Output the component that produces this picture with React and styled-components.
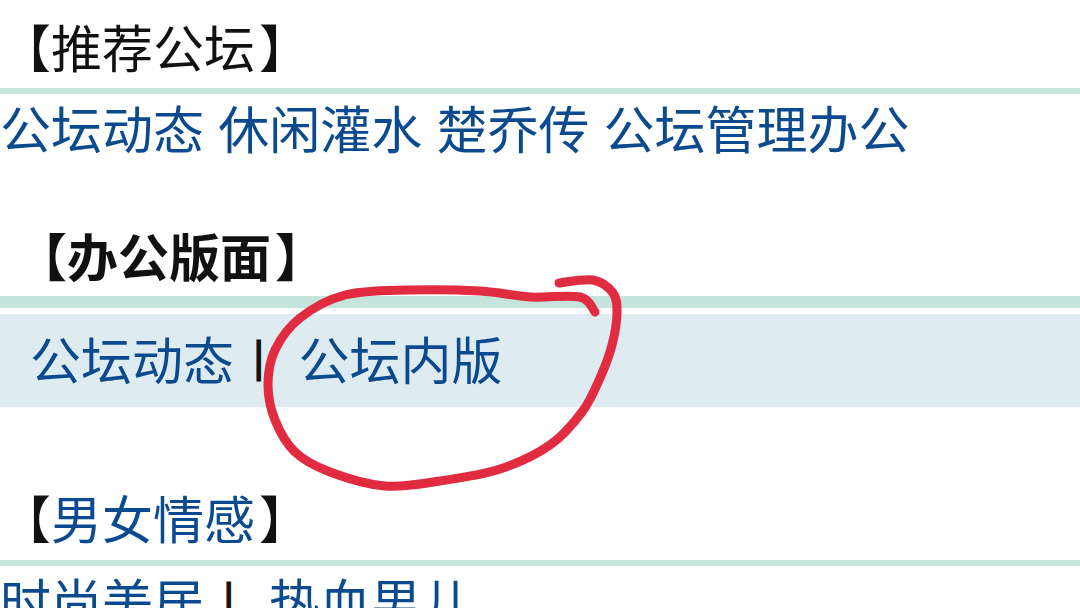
import React from "react";
import styled, { createGlobalStyle } from "styled-components";

const GlobalStyle = createGlobalStyle`
  html, body {
    margin: 0;
    padding: 0;
    background: #fff;
  }
`;

const Page = styled.div`
  position: relative;
  width: 1080px;
  height: 608px;
  overflow: hidden;
  background: #fff;
  font-family: "Liberation Sans", "Noto Sans CJK SC", sans-serif;
  font-size: 51px;
  white-space: nowrap;
`;

const Heading = styled.div`
  height: ${(p) => p.$height}px;
  margin-top: ${(p) => p.$top || 0}px;
  padding-left: ${(p) => p.$indent || 0}px;
  line-height: ${(p) => p.$height + (p.$shift ?? 14)}px;
  font-weight: ${(p) => (p.$bold ? 700 : 400)};
  color: #111;
`;

const CloseBracket = styled.span`
  display: inline-block;
  margin: 0 -4px 0 4px;
`;

const Rule = styled.div`
  height: ${(p) => p.$height || 6}px;
  background: #c5e5dc;
`;

const LinkRow = styled.div`
  height: ${(p) => p.$height}px;
  line-height: ${(p) => p.$height + (p.$shift ?? 0)}px;
  padding-left: ${(p) => p.$indent || 0}px;
`;

const Band = styled(LinkRow)`
  margin-top: 6px;
  background: #deebf0;
`;

const ForumLink = styled.a`
  color: #0b4a8f;
  text-decoration: none;
`;

const Sep = styled.span`
  display: inline-block;
  margin: 0 34px 0 19px;
  font-size: 44px;
  line-height: 1;
  vertical-align: 8px;
  color: #111;
  -webkit-text-stroke: 1px #111;
`;

const Scribble = styled.svg`
  position: absolute;
  left: 0;
  top: 0;
  pointer-events: none;
`;

// hand-drawn circle round 公坛内版, traced from the stroke
const circlePoints = [
  [559, 283], [593, 280], [613, 293], [617, 313], [612, 345], [600, 378],
  [582, 412], [550, 445], [500, 469], [440, 481], [385, 486], [330, 472],
  [295, 452], [275, 420], [268, 385], [275, 350], [300, 318], [345, 295],
  [408, 290], [480, 291], [530, 297], [580, 297], [595, 312],
];

function smoothPath(pts) {
  let d = `M${pts[0][0]} ${pts[0][1]}`;
  for (let i = 0; i < pts.length - 1; i++) {
    const p0 = pts[i - 1] || pts[i];
    const p1 = pts[i];
    const p2 = pts[i + 1];
    const p3 = pts[i + 2] || p2;
    const c1x = p1[0] + (p2[0] - p0[0]) / 6;
    const c1y = p1[1] + (p2[1] - p0[1]) / 6;
    const c2x = p2[0] - (p3[0] - p1[0]) / 6;
    const c2y = p2[1] - (p3[1] - p1[1]) / 6;
    d += ` C${c1x} ${c1y} ${c2x} ${c2y} ${p2[0]} ${p2[1]}`;
  }
  return d;
}

export default function App() {
  return (
    <Page>
      <GlobalStyle />

      <Heading $height={88}>
        【推荐公坛<CloseBracket>】</CloseBracket>
      </Heading>
      <Rule />
      <LinkRow $height={74} $shift={2}>
        <ForumLink>公坛动态</ForumLink> <ForumLink>休闲灌水</ForumLink>{" "}
        <ForumLink>楚乔传</ForumLink> <ForumLink>公坛管理办公</ForumLink>
      </LinkRow>

      <Heading $height={76} $top={52} $indent={16} $shift={4} $bold>
        【办公版面<CloseBracket>】</CloseBracket>
      </Heading>
      <Rule $height={12} />
      <Band $height={93} $indent={30} $shift={4}>
        <ForumLink>公坛动态</ForumLink>
        <Sep>|</Sep>
        <ForumLink>公坛内版</ForumLink>
      </Band>

      <Heading $height={80} $top={73} $shift={4}>
        【<ForumLink>男女情感</ForumLink>
        <CloseBracket>】</CloseBracket>
      </Heading>
      <Rule />
      <LinkRow $height={78}>
        <ForumLink>时尚美居</ForumLink>
        <Sep>|</Sep>
        <ForumLink>热血男儿</ForumLink>
      </LinkRow>

      <Scribble width="1080" height="608" viewBox="0 0 1080 608">
        <path
          d={smoothPath(circlePoints)}
          fill="none"
          stroke="#e02b40"
          strokeWidth="9"
          strokeLinecap="round"
          strokeLinejoin="round"
        />
      </Scribble>
    </Page>
  );
}
